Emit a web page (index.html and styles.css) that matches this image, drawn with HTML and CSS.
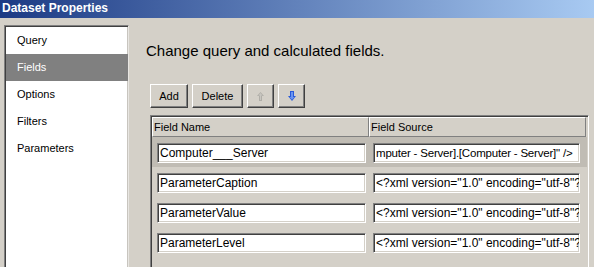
FILE: index.html
```html
<!DOCTYPE html>
<html lang="en">
<head>
<meta charset="utf-8">
<title>Dataset Properties</title>
<link rel="stylesheet" href="styles.css">
</head>
<body>
<div class="window">
  <div class="titlebar">Dataset Properties</div>
  <div class="main">
    <nav class="nav">
      <div class="nav-item">Query</div>
      <div class="nav-item active">Fields</div>
      <div class="nav-item">Options</div>
      <div class="nav-item">Filters</div>
      <div class="nav-item">Parameters</div>
    </nav>
    <section class="content">
      <h1 class="heading">Change query and calculated fields.</h1>
      <div class="toolbar">
        <button class="btn btn-add" type="button">Add</button>
        <button class="btn btn-delete" type="button">Delete</button>
        <button class="btn btn-icon btn-up" type="button" aria-label="Move up">
          <svg width="7" height="9" viewBox="0 0 7 9"><path d="M3.5 0 L7 4 L5 4 L5 9 L2 9 L2 4 L0 4 Z" fill="#b0aea8"/><path d="M3.5 1 L5.5 3.5 L4 3.5 L4 8 L3 8 L3 3.5 L1.5 3.5 Z" fill="#c8c6c0"/></svg>
        </button>
        <button class="btn btn-icon btn-down" type="button" aria-label="Move down">
          <svg width="8" height="10" viewBox="0 0 8 10"><path d="M2 0 L6 0 L6 5 L8 5 L4 10 L0 5 L2 5 Z" fill="#2a5ad8"/><path d="M3 1 L5 1 L5 6 L6.5 6 L4 8.8 L1.5 6 L3 6 Z" fill="#6b95f0"/></svg>
        </button>
      </div>
      <div class="grid">
        <div class="grid-head">
          <div class="col col-name">Field Name</div>
          <div class="col col-source">Field Source</div>
        </div>
        <div class="grid-row selected">
          <div class="cell cell-name"><input class="field" type="text" readonly value="Computer___Server"></div>
          <div class="cell cell-source"><input class="field field-src field-scrolled" type="text" readonly value="mputer - Server].[Computer - Server]&quot; /&gt;"></div>
        </div>
        <div class="grid-row">
          <div class="cell cell-name"><input class="field" type="text" readonly value="ParameterCaption"></div>
          <div class="cell cell-source"><input class="field field-src" type="text" readonly value="&lt;?xml version=&quot;1.0&quot; encoding=&quot;utf-8&quot;?&gt;"></div>
        </div>
        <div class="grid-row">
          <div class="cell cell-name"><input class="field" type="text" readonly value="ParameterValue"></div>
          <div class="cell cell-source"><input class="field field-src" type="text" readonly value="&lt;?xml version=&quot;1.0&quot; encoding=&quot;utf-8&quot;?&gt;"></div>
        </div>
        <div class="grid-row">
          <div class="cell cell-name"><input class="field" type="text" readonly value="ParameterLevel"></div>
          <div class="cell cell-source"><input class="field field-src" type="text" readonly value="&lt;?xml version=&quot;1.0&quot; encoding=&quot;utf-8&quot;?&gt;"></div>
        </div>
      </div>
    </section>
  </div>
</div>
</body>
</html>
```

FILE: styles.css
```css
* { box-sizing: border-box; }

html, body {
  margin: 0;
  padding: 0;
  width: 594px;
  height: 267px;
  overflow: hidden;
  background: #d4d0c8;
  font-family: "Liberation Sans", Arial, sans-serif;
  color: #000;
}

.window {
  width: 594px;
  height: 267px;
  overflow: hidden;
}

.titlebar {
  height: 18px;
  line-height: 17px;
  padding-left: 2px;
  font-size: 12px;
  font-weight: bold;
  color: #fff;
  background: linear-gradient(to right, #1c3a84 0%, #a8caf2 100%);
}

.main {
  display: flex;
  padding: 7px 0 0 4px;
  height: 249px;
}

.nav {
  width: 125px;
  height: 270px;
  flex: none;
  background: #fff;
  border: 1px solid;
  border-color: #808080 #e8e6e2 #fff #808080;
  box-shadow: inset 1px 1px 0 #404040, inset -1px 0 0 #c8c5bf;
  padding: 1px 0 0 1px;
}

.nav-item {
  height: 27px;
  line-height: 27px;
  padding-left: 11px;
  font-size: 11px;
}

.nav-item.active {
  background: #808080;
  color: #fff;
}

.content {
  flex: 1;
  padding-left: 17px;
}

.heading {
  margin: 17px 0 0 0;
  font-size: 15px;
  line-height: 18px;
  font-weight: normal;
}

.toolbar {
  display: flex;
  gap: 4px;
  margin: 24px 0 0 4px;
}

.btn {
  height: 24px;
  padding: 0;
  font-family: "Liberation Sans", Arial, sans-serif;
  font-size: 11px;
  color: #000;
  background: #d4d0c8;
  border: 1px solid;
  border-color: #fff #404040 #404040 #fff;
  box-shadow: inset -1px -1px 0 #808080;
  display: flex;
  align-items: center;
  justify-content: center;
}

.btn-add { width: 38px; }
.btn-delete { width: 51px; }
.btn-up { width: 27px; }
.btn-down { width: 27px; }

.grid {
  margin: 7px 0 0 4px;
  width: 439px;
  height: 200px;
  border: 1px solid;
  border-color: #808080 #fff #fff #808080;
  box-shadow: inset 1px 1px 0 #404040, inset -1px -1px 0 #d4d0c8;
  padding: 1px;
}

.grid-head {
  display: flex;
  height: 20px;
}

.col {
  width: 217px;
  height: 20px;
  line-height: 18px;
  padding-left: 1px;
  font-size: 11px;
  background: #d4d0c8;
  border: 1px solid;
  border-color: #fff #808080 #808080 #fff;
}

.grid-row {
  display: flex;
  height: 30px;
  padding-top: 6px;
}

.grid-row.selected {
  background: #c0bcb4;
}

.cell { width: 217px; }
.cell-name { padding-left: 5px; }
.cell-source { padding-left: 4px; }

.field {
  display: block;
  height: 20px;
  margin: 0;
  padding: 0 0 0 2px;
  font-family: "Liberation Sans", Arial, sans-serif;
  font-size: 12px;
  color: #000;
  background: #fff;
  border: 1px solid;
  border-color: #808080 #fff #fff #808080;
  box-shadow: inset 1px 1px 0 #404040, inset -1px -1px 0 #d4d0c8;
  outline: none;
}

.cell-name .field { width: 209px; }
.cell-source .field { width: 207px; }

.field-scrolled { font-size: 11.5px; letter-spacing: -0.2px; }
```
